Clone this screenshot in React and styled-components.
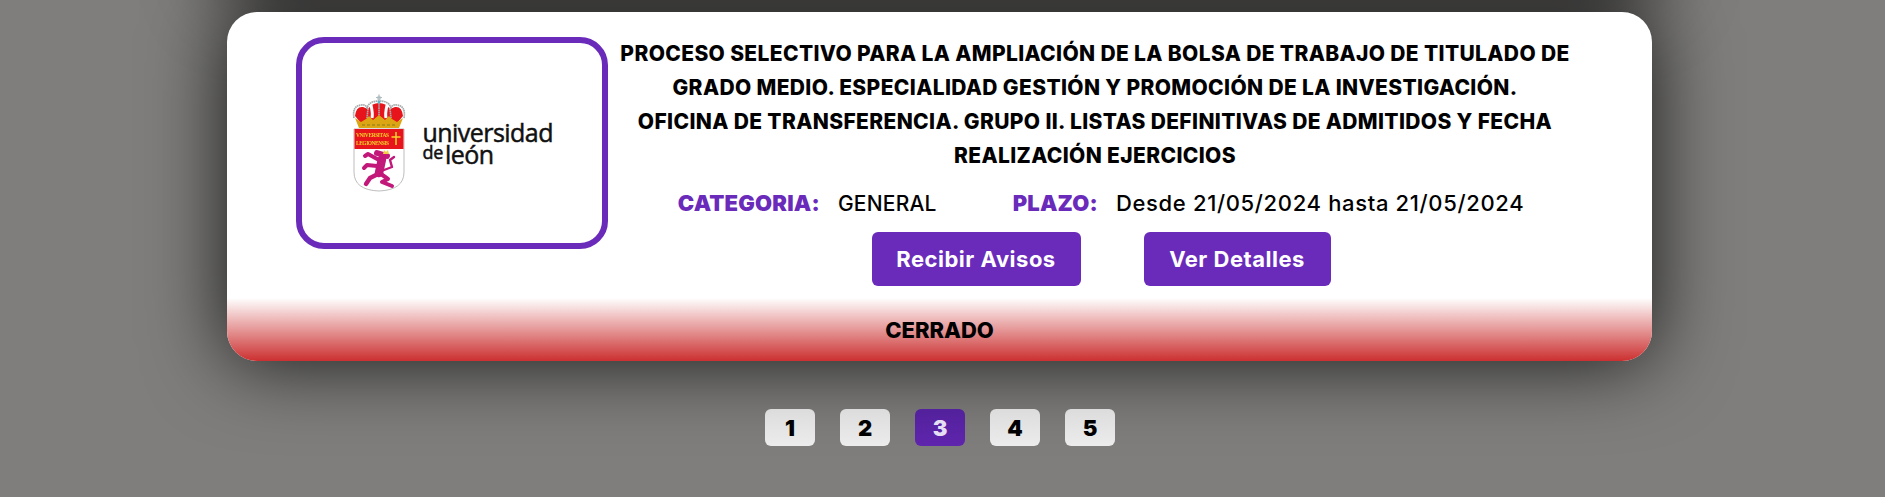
import React from "react";
import styled, { createGlobalStyle } from "styled-components";

const purple = "#6a2bbb";

const GlobalStyle = createGlobalStyle`
    html, body {
        margin: 0;
        height: 100%;
        overflow: hidden;
        background: #7f7e7c;
        font-family: "Inter", "Liberation Sans", sans-serif;
    }
`;

const Page = styled.div`
    width: 1880px;
    height: 497px;
    padding-top: 12px;
    box-sizing: border-box;
    overflow: hidden;
`;

// second shadow belongs to the previous card, scrolled out above the top edge
const Card = styled.section`
    width: 1425px;
    height: 349px;
    margin-left: 227px;
    display: flex;
    flex-direction: column;
    justify-content: space-between;
    background: #fff;
    border-radius: 30px;
    overflow: hidden;
    box-shadow: 0 0 80px rgba(0, 0, 0, 0.82), 0 -368px 80px rgba(0, 0, 0, 0.82);
`;

const CardBody = styled.div`
    display: flex;
    align-items: flex-start;
    padding: 25px 70px 0 69px;
`;

const LogoBox = styled.div`
    width: 312px;
    height: 212px;
    flex: none;
    box-sizing: border-box;
    border: 6px solid ${purple};
    border-radius: 28px;
    display: flex;
    align-items: center;
    justify-content: center;
    gap: 17px;
    padding-bottom: 1px;
`;

const LogoText = styled.div`
    font-family: "Open Sans", sans-serif;
    color: #111;
    -webkit-text-stroke: 0.5px #111;
    width: 130px;
    margin-top: 3px;
`;

const LogoLine = styled.div`
    font-size: 25px;
    line-height: 22px;
    letter-spacing: -0.55px;
    white-space: nowrap;
`;

const LogoSmall = styled.span`
    font-size: 18px;
    letter-spacing: -0.3px;
    position: relative;
    top: -5px;
    margin-right: 2px;
`;

const Info = styled.div`
    flex: 1;
    min-width: 0;
    display: flex;
    flex-direction: column;
    align-items: center;
`;

const Title = styled.h2`
    margin: 0;
    font-size: 21px;
    line-height: 34px;
    font-weight: 800;
    color: #000;
    text-align: center;
    white-space: nowrap;
    letter-spacing: 0.36px;
`;

const Meta = styled.div`
    display: flex;
    align-items: center;
    margin: 13px 0 0 12px;
    height: 34px;
    color: #000;
    white-space: nowrap;
`;

const MetaLabel = styled.span`
    font-size: 22px;
    font-weight: 900;
    letter-spacing: 0.2px;
    color: ${purple};
    margin-right: 18px;
`;

const MetaValue = styled.span`
    font-size: ${(p) => (p.$long ? 22 : 21)}px;
    font-weight: 500;
    letter-spacing: ${(p) => (p.$long ? 0.65 : 0.2)}px;
    margin-right: ${(p) => p.$gap || 0}px;
`;

const Actions = styled.div`
    display: flex;
    gap: 63px;
    margin: 12px 0 0 12px;
`;

const Button = styled.button`
    height: 54px;
    width: ${(p) => p.$width}px;
    padding: 0;
    border: none;
    border-radius: 6px;
    background: ${purple};
    color: #fff;
    font-family: inherit;
    font-size: 22px;
    font-weight: 700;
    letter-spacing: 0.5px;
`;

const Status = styled.div`
    height: 63px;
    display: flex;
    align-items: center;
    justify-content: center;
    box-sizing: border-box;
    background: linear-gradient(to bottom, #fff 0%, #cc3030 100%);
    font-size: 22px;
    font-weight: 800;
    color: #000;
`;

const Pager = styled.nav`
    position: relative;
    z-index: 1;
    display: flex;
    justify-content: center;
    gap: 25px;
    margin-top: 48px;
`;

const PageButton = styled.button`
    width: 50px;
    height: 37px;
    padding: 0;
    border: none;
    border-radius: 6px;
    font-family: inherit;
    font-size: 22px;
    font-weight: 900;
    color: ${(p) => (p.$active ? "#e6def3" : "#000")};
    background: ${(p) =>
        p.$active
            ? "linear-gradient(to bottom, #53219c, #5f25ad)"
            : "linear-gradient(to bottom, #dcdcdc, #ececec)"};
`;

const CrestSvg = styled.svg`
    flex: none;
    filter: blur(0.25px);
`;

const Crest = () => (
    <CrestSvg width="54" height="98" viewBox="0 0 54 98">
        {/* shield */}
        <path d="M2 35 H52 V78 Q52 96 27 97 Q2 96 2 78 Z" fill="#fff" stroke="#b5b5b5" strokeWidth="0.9" />
        <rect x="2.5" y="35" width="49" height="20" fill="#e8141c" />
        <text x="4" y="42.5" fontFamily="Liberation Serif, serif" fontSize="5.4" fontWeight="700" fill="#f7d52a" textLength="33">VNIVERSITAS</text>
        <text x="4" y="50.5" fontFamily="Liberation Serif, serif" fontSize="5.4" fontWeight="700" fill="#f7d52a" textLength="33">LEGIONENSIS</text>
        <path d="M44 38 V51 M39.5 43 H48.5" stroke="#f7d52a" strokeWidth="1.5" fill="none" />
        {/* lion */}
        <g stroke="#c2187a" fill="none" strokeLinecap="round" strokeLinejoin="round">
            <path d="M30 65 L27 79" strokeWidth="8.5" />
            <path d="M27 66 L16 60 L13 62" strokeWidth="4" />
            <path d="M25 72 L15 71 L12 74" strokeWidth="4" />
            <path d="M26 80 L18 84 L14 90" strokeWidth="4.4" />
            <path d="M29 80 L36 85 L30 88 L40 92" strokeWidth="4" />
            <path d="M32 76 L40 73 L38 66 L42 63" strokeWidth="2.4" />
            <path d="M25 59 L35 62" strokeWidth="6" />
        </g>
        <path d="M31 60 L32 56 L34 58 L36 56 L37 60 Z" fill="#f3cf45" />
        {/* crown */}
        <path d="M3 22 Q4 12 11 13 L16 15 Q20 9 27 9 Q34 9 38 15 L43 13 Q50 12 51 22 L46 28 H8 Z" fill="#e8141c" />
        <path d="M19 11 Q21 20 20 24 M35 11 Q33 20 34 24" stroke="#fff" strokeWidth="3" fill="none" />
        <g fill="none" stroke="#a5a9a9" strokeWidth="1.7" strokeDasharray="1.6 0.5">
            <path d="M2 24 Q0 12 9 11 Q14 10 16 15 L15 24" />
            <path d="M52 24 Q54 12 45 11 Q40 10 38 15 L39 24" />
            <path d="M15 15 Q16 7 27 7 Q38 7 39 15" />
            <path d="M27 7 V22" />
        </g>
        <path d="M3 24 L9 28 L14 25 L17 22 L21 26 L27 21 L33 26 L37 22 L40 25 L45 28 L51 24 L47 34 H7 Z" fill="#dba514" />
        <path d="M10 31 H44" stroke="#8a7a1a" strokeWidth="1.2" strokeDasharray="3 2" />
        <circle cx="27" cy="4" r="2.2" fill="#c9d3d6" />
        <path d="M27 0.5 V7 M24 3.5 H30" stroke="#aebbc0" strokeWidth="1.2" />
        <circle cx="27" cy="8" r="1.5" fill="#5fb2c4" />
    </CrestSvg>
);

const App = () => {
    return (
        <>
            <GlobalStyle />
            <Page>
                <Card>
                    <CardBody>
                        <LogoBox>
                            <Crest />
                            <LogoText>
                                <LogoLine>universidad</LogoLine>
                                <LogoLine><LogoSmall>de</LogoSmall>león</LogoLine>
                            </LogoText>
                        </LogoBox>
                        <Info>
                            <Title>
                                PROCESO SELECTIVO PARA LA AMPLIACIÓN DE LA BOLSA DE TRABAJO DE TITULADO DE<br />
                                GRADO MEDIO. ESPECIALIDAD GESTIÓN Y PROMOCIÓN DE LA INVESTIGACIÓN.<br />
                                OFICINA DE TRANSFERENCIA. GRUPO II. LISTAS DEFINITIVAS DE ADMITIDOS Y FECHA<br />
                                REALIZACIÓN EJERCICIOS
                            </Title>
                            <Meta>
                                <MetaLabel>CATEGORIA:</MetaLabel>
                                <MetaValue $gap={76}>GENERAL</MetaValue>
                                <MetaLabel>PLAZO:</MetaLabel>
                                <MetaValue $long>Desde 21/05/2024 hasta 21/05/2024</MetaValue>
                            </Meta>
                            <Actions>
                                <Button $width={209}>Recibir Avisos</Button>
                                <Button $width={187}>Ver Detalles</Button>
                            </Actions>
                        </Info>
                    </CardBody>
                    <Status>CERRADO</Status>
                </Card>
                <Pager>
                    {[1, 2, 3, 4, 5].map((n) => (
                        <PageButton key={n} $active={n === 3}>{n}</PageButton>
                    ))}
                </Pager>
            </Page>
        </>
    );
};

export default App;
